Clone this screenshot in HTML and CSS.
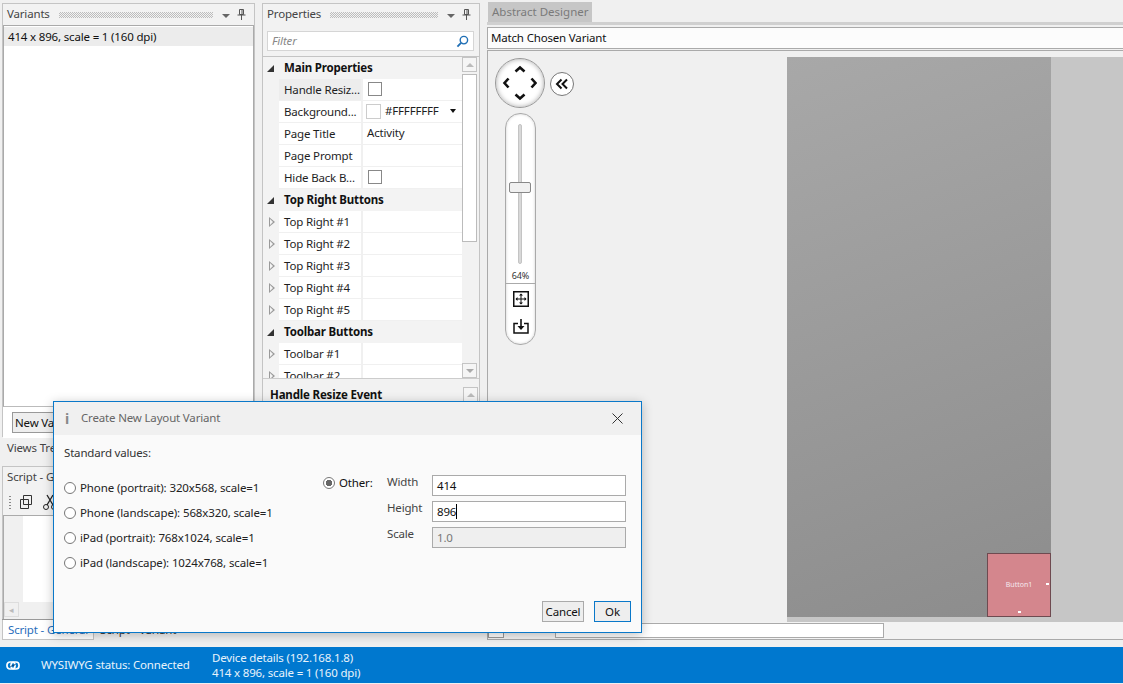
FILE: index.html
```html
<!DOCTYPE html>
<html lang="en">
<head>
<meta charset="utf-8">
<title>Create New Layout Variant</title>
<link rel="stylesheet" href="styles.css">
</head>
<body>
<div class="app">
  <div class="workspace">
    <div class="left-col">
      <section class="variants">
        <header class="panel-head"><span class="panel-title">Variants</span><span class="grip"></span><span class="caret-down"></span>
          <svg class="pin" width="9" height="11" viewBox="0 0 9 11"><path d="M2.5.5h4v5h-4zM5 1v4M.5 6h8M4.5 6v5" fill="none" stroke="#555"/></svg></header>
        <div class="variants-body">
          <div class="variants-list"><div class="variant-row">414 x 896, scale = 1 (160 dpi)</div></div>
          <div class="variants-foot"><button class="new-btn">New Variant</button></div>
        </div>
      </section>
      <div class="tab-label">Views Tree</div>
      <section class="script">
        <div class="script-main">
          <div class="script-head">Script - General</div>
          <div class="script-tools">
            <span class="tool-grip"></span>
            <svg width="14" height="16" viewBox="0 0 14 16"><path d="M4.500 1.500h8v9h-8zM1.500 5.500h8v9h-8z" fill="#f2f2f2" stroke="#333"/></svg>
            <svg width="16" height="17" viewBox="0 0 16 17"><path d="M5 1l6 10M11 1L5 11" stroke="#222" fill="none" stroke-width="1.300"/><circle cx="4" cy="13" r="2.500" fill="none" stroke="#222"/><circle cx="12" cy="13" r="2.500" fill="none" stroke="#222"/></svg>
          </div>
          <div class="script-edit"><div class="gutter"></div><div class="code"></div></div>
          <div class="script-hbar"><span class="hbar-btn">◂</span></div>
        </div>
        <div class="script-tabs"><span class="tab-on">Script - General</span><span class="tab-off">Script - Variant</span></div>
      </section>
    </div>

    <div class="mid-col">
      <section class="properties">
        <header class="panel-head"><span class="panel-title">Properties</span><span class="grip"></span><span class="caret-down"></span>
          <svg class="pin" width="9" height="11" viewBox="0 0 9 11"><path d="M2.5.5h4v5h-4zM5 1v4M.5 6h8M4.500 6v5" fill="none" stroke="#555"/></svg></header>
        <div class="filter-wrap"><div class="filter"><span>Filter</span>
          <svg width="13" height="13" viewBox="0 0 14 14"><circle cx="8.500" cy="5.500" r="4" fill="none" stroke="#1f6fb5" stroke-width="1.500"/><path d="M5.500 8.500L1.500 12.500" stroke="#1f6fb5" stroke-width="2"/></svg></div></div>
        <div class="grid-wrap">
          <div class="grid">
            <div class="cat"><span class="tri-open"></span>Main Properties</div>
            <div class="row"><span class="exp"></span><span class="name hov">Handle Resiz...</span><span class="val"><span class="check"></span></span></div>
            <div class="row"><span class="exp"></span><span class="name">Background...</span><span class="val color"><span class="swatch"></span><span class="hex">#FFFFFFFF</span><span class="drop"></span></span></div>
            <div class="row"><span class="exp"></span><span class="name">Page Title</span><span class="val">Activity</span></div>
            <div class="row"><span class="exp"></span><span class="name">Page Prompt</span><span class="val"></span></div>
            <div class="row"><span class="exp"></span><span class="name">Hide Back B...</span><span class="val"><span class="check"></span></span></div>
            <div class="cat"><span class="tri-open"></span>Top Right Buttons</div>
            <div class="row"><span class="exp"><i class="tri"></i></span><span class="name">Top Right #1</span><span class="val"></span></div>
            <div class="row"><span class="exp"><i class="tri"></i></span><span class="name">Top Right #2</span><span class="val"></span></div>
            <div class="row"><span class="exp"><i class="tri"></i></span><span class="name">Top Right #3</span><span class="val"></span></div>
            <div class="row"><span class="exp"><i class="tri"></i></span><span class="name">Top Right #4</span><span class="val"></span></div>
            <div class="row"><span class="exp"><i class="tri"></i></span><span class="name">Top Right #5</span><span class="val"></span></div>
            <div class="cat"><span class="tri-open"></span>Toolbar Buttons</div>
            <div class="row"><span class="exp"><i class="tri"></i></span><span class="name">Toolbar #1</span><span class="val"></span></div>
            <div class="row"><span class="exp"><i class="tri"></i></span><span class="name">Toolbar #2</span><span class="val"></span></div>
          </div>
          <div class="vbar">
            <span class="vbtn"><i class="up"></i></span>
            <span class="vthumb"></span>
            <span class="vspace"></span>
            <span class="vbtn"><i class="dn"></i></span>
          </div>
        </div>
        <div class="help"><span class="help-title">Handle Resize Event</span><span class="vbtn"><i class="up"></i></span></div>
      </section>
    </div>

    <div class="designer">
      <div class="tabstrip"><span class="doc-tab">Abstract Designer</span></div>
      <div class="match">Match Chosen Variant</div>
      <div class="stage">
        <div class="tools">
          <div class="nav-row">
            <div class="pad">
              <svg width="50" height="50" viewBox="0 0 50 50"><g fill="none" stroke="#111" stroke-width="2.600"><path d="M20.500 13.500l4.500-4 4.500 4M20.500 36.500l4.500 4 4.500-4M13.500 20.500l-4 4.500 4 4.500M36.500 20.500l4 4.500-4 4.500"/></g></svg>
            </div>
            <div class="collapse"><svg width="16" height="14" viewBox="0 0 16 14"><path d="M7.500 2.500L3 7l4.500 4.500M13 2.500L8.500 7l4.500 4.500" fill="none" stroke="#111" stroke-width="2"/></svg></div>
          </div>
          <div class="zoom-box">
            <div class="track-area"><span class="track"></span><span class="knob"></span></div>
            <div class="pct">64%</div>
            <div class="zoom-tools">
              <svg width="16" height="16" viewBox="0 0 16 16"><rect x=".75" y=".75" width="14.500" height="14.500" fill="none" stroke="#111" stroke-width="1.500"/><path d="M8 3v10M3 8h10" stroke="#111"/><path d="M8 2.500l-2 2h4zM8 13.500l-2-2h4zM2.500 8l2-2v4zM13.500 8l-2-2v4z" fill="#111"/></svg>
              <svg width="16" height="15" viewBox="0 0 16 15"><path d="M5 4.500H1v9.500h14V4.500h-4" fill="none" stroke="#111" stroke-width="1.500"/><path d="M8 0v9" stroke="#111" stroke-width="1.600"/><path d="M4.500 7L8 11l3.500-4z" fill="#111"/></svg>
            </div>
          </div>
        </div>
        <div class="canvas">
          <div class="device"><div class="device-btn"><span>Button1</span><i class="dot dot-r"></i><i class="dot dot-b"></i></div></div>
        </div>
      </div>
      <div class="stage-foot"><span class="foot-a"></span><span class="foot-b"></span></div>
    </div>
  </div>

  <footer class="status">
    <svg class="link" width="14" height="9" viewBox="0 0 14 9"><rect x="1" y="1" width="8" height="7" rx="3" fill="none" stroke="#fff" stroke-width="1.700"/><rect x="5" y="1" width="8" height="7" rx="3" fill="none" stroke="#fff" stroke-width="1.700"/><path d="M4.500 5.500l5-2" stroke="#0a3f70" stroke-width="1"/></svg>
    <span class="st-conn">WYSIWYG status: Connected</span>
    <span class="st-dev">Device details (192.168.1.8)<br>414 x 896, scale = 1 (160 dpi)</span>
  </footer>
</div>

<div class="dialog">
  <div class="dlg-title"><span class="dlg-i">i</span><span class="dlg-text">Create New Layout Variant</span>
    <svg class="dlg-x" width="11" height="11" viewBox="0 0 11 11"><path d="M.5.5l10 10M10.500.5l-10 10" stroke="#333" fill="none"/></svg></div>
  <div class="dlg-body">
    <div class="std">Standard values:</div>
    <div class="dlg-cols">
      <div class="radios">
        <label class="radio-row"><span class="radio"></span>Phone (portrait): 320x568, scale=1</label>
        <label class="radio-row"><span class="radio"></span>Phone (landscape): 568x320, scale=1</label>
        <label class="radio-row"><span class="radio"></span>iPad (portrait): 768x1024, scale=1</label>
        <label class="radio-row"><span class="radio"></span>iPad (landscape): 1024x768, scale=1</label>
      </div>
      <div class="other">
        <label class="other-radio"><span class="radio on"></span>Other:</label>
        <div class="fields">
          <span class="f-label">Width</span><div class="f-input">414</div>
          <span class="f-label">Height</span><div class="f-input">896<i class="caret"></i></div>
          <span class="f-label">Scale</span><div class="f-input off">1.0</div>
        </div>
      </div>
    </div>
    <div class="dlg-btns"><button class="btn">Cancel</button><button class="btn ok">Ok</button></div>
  </div>
</div>
</body>
</html>
```
FILE: styles.css
```css
* { box-sizing: border-box; }
html, body { margin: 0; height: 684px; overflow: hidden; }
body { font: 11.5px/16px "Noto Sans", "Open Sans", sans-serif; color: #1e1e1e; background: #f0f0f0; letter-spacing: -.17px; }
.app { width: 1123px; height: 684px; display: flex; flex-direction: column; position: relative; }
.workspace { flex: 0 0 647px; display: flex; overflow: hidden; }
.left-col { width: 260px; padding: 3px 5px 0 2px; display: flex; flex-direction: column; }
.mid-col { width: 227px; padding: 3px 7px 0 2px; }

.variants { height: 434px; border: 1px solid #c4c4c4; border-bottom: 0; background: #f2f2f2; display: flex; flex-direction: column; }
.panel-head { height: 21px; flex: none; display: flex; align-items: center; padding: 0 7px 0 4px; }
.panel-title { color: #444; margin-top: -2px; }
.grip { flex: 1; height: 6px; margin: 0 9px; background: repeating-conic-gradient(#bcbcbc 0 25%, transparent 0 50%) 0 0 / 2px 2px; }
.caret-down { width: 0; height: 0; border: 4px solid transparent; border-top: 4px solid #666; border-bottom: 0; margin-right: 7px; margin-top: 2px; }
.pin { display: block; margin-right: 1px; }
.variants-body { flex: 1; background: #fff; border-top: 1px solid #aaa; display: flex; flex-direction: column; }
.variants-list { height: 381px; padding-top: 1px; border-bottom: 1px solid #bbb; border-left: 1px solid #aaa; border-right: 1px solid #aaa; }
.variant-row { height: 19px; background: #ececec; padding: 2px 4px 0; color: #111; }
.variants-foot { flex: 1; padding: 5px 9px; background: #fff; }
.new-btn { width: 120px; height: 21px; border: 1px solid #999; background: #eee; font: inherit; letter-spacing: inherit; text-align: left; padding: 0 2px; color: #111; }
.tab-label { height: 29px; padding: 3px 5px; color: #444; }
.script { flex: 1; margin-bottom: 7px; display: flex; flex-direction: column; background: #f2f2f2; }
.script-main { flex: 1; display: flex; flex-direction: column; border: 1px solid #c4c4c4; border-bottom: 0; }
.script-head { height: 22px; padding: 2px 4px; color: #444; flex: none; }
.script-tools { height: 26px; flex: none; display: flex; align-items: center; gap: 9px; padding-left: 6px; }
.tool-grip { width: 2px; height: 15px; background-image: radial-gradient(#888 50%, transparent 55%); background-size: 2px 3px; margin-right: -1px; }
.script-edit { flex: 1; display: flex; border: 1px solid #aaa; border-bottom: 0; }
.gutter { width: 19px; background: #f0f0f0; }
.code { flex: 1; background: #fff; }
.script-hbar { height: 17px; flex: none; background: #f0f0f0; border-left: 1px solid #aaa; }
.hbar-btn { display: block; width: 15px; height: 15px; border: 1px solid #ddd; font-size: 9px; line-height: 13px; text-align: center; color: #bbb; }
.script-tabs { height: 21px; flex: none; display: flex; border-top: 1px solid #999; background: #f0f0f0; }
.tab-on { padding: 2px 5px; background: #fff; color: #2a6ebb; width: 92px; white-space: nowrap; overflow: hidden; border: 1px solid #c4c4c4; border-top: 0; }
.tab-off { padding: 2px 6px; color: #333; white-space: nowrap; }

.properties { height: 500px; border: 1px solid #c4c4c4; background: #f2f2f2; }
.filter-wrap { padding: 6px 5px 5px 4px; border-bottom: 1px solid #c4c4c4; }
.filter { height: 20px; background: #fff; border: 1px solid #d5d5d5; display: flex; align-items: center; justify-content: space-between; padding: 0 4px; font-style: italic; color: #888; }
.grid-wrap { height: 322px; display: flex; border-bottom: 1px solid #ccc; overflow: hidden; padding-right: 1px; }
.grid { width: 199px; flex: none; overflow: hidden; background: #f3f3f3; }
.cat { height: 22px; display: flex; align-items: center; font-weight: 700; color: #111; }
.tri-open { width: 0; height: 0; border-left: 7px solid transparent; border-bottom: 7px solid #333; margin: 0 10px 0 4px; }
.row { height: 22px; display: flex; }
.exp { width: 16px; flex: none; display: flex; align-items: center; padding-left: 6px; }
.tri { display: block; position: relative; width: 0; height: 0; border-left: 6px solid #9a9a9a; border-top: 5px solid transparent; border-bottom: 5px solid transparent; }
.tri::after { content: ""; position: absolute; left: -5px; top: -3.500px; width: 0; height: 0; border-left: 3.500px solid #f3f3f3; border-top: 3.500px solid transparent; border-bottom: 3.500px solid transparent; }
.name { width: 84px; flex: none; padding: 3px 5px 0; background: #fff; border-bottom: 1px solid #f0f0f0; border-right: 2px solid #f0f0f0; white-space: nowrap; overflow: hidden; }
.name.hov { background: #ededed; }
.val { flex: 1; padding: 0 4px 1px; background: #fff; border-bottom: 1px solid #f0f0f0; display: flex; align-items: center; }
.check { width: 14px; height: 14px; border: 1px solid #888; background: #fff; margin-left: 1px; }
.val.color { padding-left: 3px; }
.swatch { width: 15px; height: 15px; border: 1px solid #ccc; background: #fff; margin-right: 4px; flex: none; }
.hex { flex: 1; }
.drop { width: 0; height: 0; border: 3.500px solid transparent; border-top: 4px solid #111; border-bottom: 0; margin-right: 2px; }
.vbar { width: 15px; display: flex; flex-direction: column; }
.vbtn { display: flex; flex: none; width: 15px; height: 15px; border: 1px solid #c4c4c4; background: #f5f5f5; align-items: center; justify-content: center; }
.up, .dn { display: block; width: 0; height: 0; border: 4px solid transparent; }
.up { border-bottom: 4px solid #bbb; border-top: 0; }
.dn { border-top: 4px solid #aaa; border-bottom: 0; }
.vthumb { width: 15px; height: 168px; border: 1px solid #bbb; background: #fff; margin-top: 2px; flex: none; }
.vspace { flex: 1; }
.help { display: flex; justify-content: space-between; padding: 8px 1px 0 7px; background: #f2f2f2; font-weight: 700; color: #111; height: 60px; }

.designer { flex: 1; display: flex; flex-direction: column; }
.tabstrip { height: 25px; flex: none; padding: 2px 0 0 1px; background: #f0f0f0; border-bottom: 3px solid #d0d0d0; }
.doc-tab { display: inline-block; height: 20px; padding: 2px 4px; background: #c6c6c6; color: #7a7a7a; letter-spacing: 0; }
.match { height: 22px; flex: none; margin-top: 2px; background: #fcfcfc; border: 1px solid #aaa; border-right: 0; padding: 2px 3px; color: #111; }
.stage { flex: 1; display: flex; border-left: 1px solid #aaa; border-top: 1px solid #aaa; background: #f0f0f0; margin-top: 1px; }
.tools { width: 299px; flex: none; padding: 7px 0 0 7px; }
.nav-row { display: flex; align-items: center; gap: 5px; }
.pad { width: 50px; height: 50px; border-radius: 50%; background: #fff; border: 1px solid #999; box-shadow: inset 0 0 5px #aaa; }
.pad svg { display: block; margin: -1px; }
.collapse { width: 24px; height: 24px; border-radius: 50%; background: #fff; border: 1px solid #777; display: flex; align-items: center; justify-content: center; margin-top: 2px; }
.zoom-box { width: 31px; height: 232px; margin: 5px 0 0 10px; border: 1px solid #aaa; border-radius: 15px; background: #fff; box-shadow: inset 0 0 3px #ccc; display: flex; flex-direction: column; align-items: center; }
.track-area { position: relative; height: 150px; width: 100%; flex: none; margin-top: 10px; }
.track { position: absolute; left: 12px; top: 0; width: 4px; height: 140px; background: #d8d8d8; border: 1px solid #c4c4c4; border-radius: 2px; }
.knob { position: absolute; left: 3px; top: 58px; width: 22px; height: 11px; background: #f0f0f0; border: 1px solid #888; border-radius: 2px; }
.pct { font-size: 9px; line-height: 12px; color: #333; height: 13px; margin-top: -4px; }
.zoom-tools { width: 100%; flex: 1; border-top: 1px solid #aaa; display: flex; flex-direction: column; align-items: center; gap: 12px; padding-top: 7px; }
.zoom-tools svg { display: block; }
.canvas { flex: 1; background: #c6c6c6; height: 565px; margin-top: 6px; overflow: hidden; }
.device { width: 264px; height: 560px; background: linear-gradient(160deg, #a8a8a8, #8c8c8c); display: flex; justify-content: flex-end; align-items: flex-end; }
.device-btn { width: 64px; height: 64px; background: #d4868d; border: 1px solid #6e4a50; display: flex; align-items: center; justify-content: center; position: relative; color: #f5e8ee; font-size: 7px; line-height: 10px; letter-spacing: 0; }
.dot { position: absolute; width: 3px; height: 2px; background: #fff; }
.dot-r { right: 1px; top: 29px; }
.dot-b { left: 30px; bottom: 3px; }
.stage-foot { height: 18px; flex: none; background: #f3f3f3; border-left: 1px solid #aaa; border-bottom: 1px solid #aaa; margin-bottom: 7px; display: flex; }
.foot-a { width: 16px; height: 15px; border: 1px solid #999; background: #fff; margin-top: 1px; }
.foot-b { width: 329px; height: 15px; border: 1px solid #aaa; background: #fff; margin: 1px 0 0 51px; }

.status { flex: 0 0 36px; background: #0078cf; display: flex; align-items: center; padding-left: 6px; color: #e8f3fb; }
.link { display: block; }
.st-conn { margin-left: 21px; width: 171px; }
.st-dev { line-height: 15px; margin-top: -1px; }

.dialog { position: absolute; left: 53px; top: 401px; width: 589px; height: 232px; background: #fafafa; border: 1px solid #0a78c9; box-shadow: 0 2px 10px rgba(0,0,0,.25); display: flex; flex-direction: column; }
.dlg-title { height: 33px; flex: none; background: #f0f0f0; display: flex; align-items: center; padding: 0 18px 0 11px; color: #666; }
.dlg-i { width: 5px; font-weight: 700; color: #888; font-size: 14px; }
.dlg-text { margin: -2px 0 0 11px; flex: 1; }
.dlg-x { display: block; }
.dlg-body { flex: 1; position: relative; padding: 10px 10px 0 10px; display: flex; flex-direction: column; }
.std { color: #333; }
.dlg-cols { display: flex; margin-top: 19px; height: 106px; }
.radios { width: 259px; display: flex; flex-direction: column; gap: 9px; letter-spacing: -.12px; }
.radio-row { display: flex; align-items: center; height: 16px; white-space: nowrap; color: #222; }
.radio { width: 12px; height: 12px; border-radius: 50%; border: 1px solid #777; background: #fff; margin-right: 4px; flex: none; }
.radio.on { background: radial-gradient(circle, #666 0 3px, #fff 3.500px); }
.other { display: flex; align-items: flex-start; margin-top: -5px; }
.other-radio { width: 64px; height: 16px; display: flex; align-items: center; color: #111; }
.fields { display: grid; grid-template-columns: 45px 194px; grid-auto-rows: 21px; row-gap: 5px; }
.f-label { color: #444; line-height: 14px; }
.f-input { height: 21px; border: 1px solid #aaa; background: #fff; padding: 2px 4px 0; color: #111; position: relative; }
.f-input.off { background: #efefef; color: #777; }
.caret { display: inline-block; width: 1px; height: 15px; background: #000; vertical-align: -3px; }
.dlg-btns { display: flex; justify-content: flex-end; gap: 10px; margin-top: 15px; }
.btn { width: 42px; height: 21px; padding: 0; border: 1px solid #aaa; background: #eee; font: inherit; letter-spacing: inherit; color: #111; }
.btn.ok { width: 37px; border-color: #0a78c9; }
```
